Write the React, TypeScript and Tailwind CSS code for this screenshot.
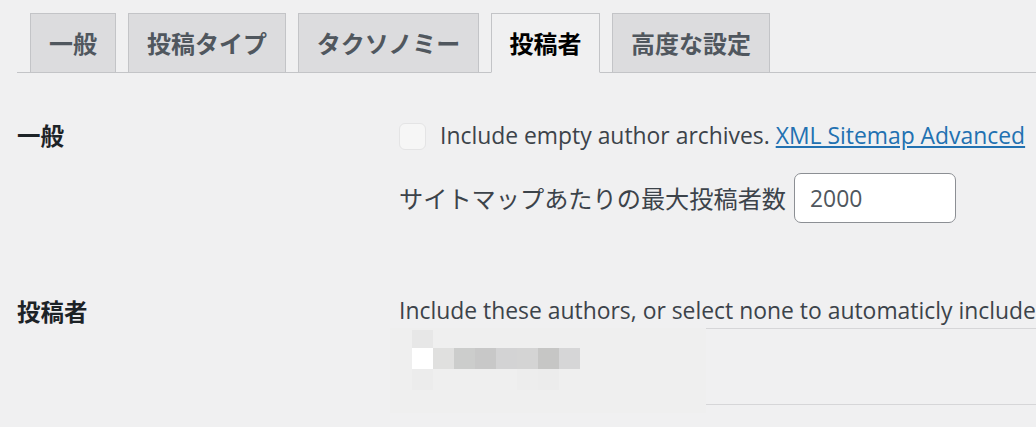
import React from "react";

type Tab = { label: string; width: string; active?: boolean };

const tabs: Tab[] = [
  { label: "一般", width: "w-[86px]" },
  { label: "投稿タイプ", width: "w-[158px]" },
  { label: "タクソノミー", width: "w-[181px]" },
  { label: "投稿者", width: "w-[109px]", active: true },
  { label: "高度な設定", width: "w-[158px]" },
];

// mosaic cells that hide the author names
const mosaic = [
  { x: 22, y: 2, c: "bg-[#e7e7e7]" },
  { x: 22, y: 20, c: "bg-[#ffffff]" },
  { x: 43, y: 20, c: "bg-[#e0e0df]" },
  { x: 64, y: 20, c: "bg-[#cccdcc]" },
  { x: 85, y: 20, c: "bg-[#c8c8c8]" },
  { x: 106, y: 20, c: "bg-[#d3d3d4]" },
  { x: 127, y: 20, c: "bg-[#d4d4d4]" },
  { x: 148, y: 20, c: "bg-[#c6c6c5]" },
  { x: 169, y: 20, c: "bg-[#d6d6d7]" },
  { x: 22, y: 41, c: "bg-[#ececec]" },
  { x: 127, y: 41, c: "bg-[#ededed]" },
  { x: 148, y: 41, c: "bg-[#ececec]" },
];

export default function App() {
  return (
    <div
      className="relative h-[427px] w-[1036px] overflow-hidden bg-[#f0f0f1] text-[#3c434a]"
      style={{ fontFamily: '"Open Sans", "Noto Sans CJK JP", sans-serif' }}
    >
      {/* tabs */}
      <div className="ml-[17px] flex items-end gap-[12px] border-b border-[#c3c4c7] pl-[13px] pt-[13px]">
        {tabs.map((tab) => (
          <div
            key={tab.label}
            className={`-mb-px flex h-[60px] items-center justify-center border border-[#c3c4c7] text-[24px] font-semibold ${tab.width} ${
              tab.active ? "border-b-[#f0f0f1] bg-[#f0f0f1] text-[#000000]" : "bg-[#dcdcde] text-[#50575e]"
            }`}
            style={{ fontFamily: '"Noto Sans CJK JP", sans-serif' }}
          >
            {tab.label}
          </div>
        ))}
      </div>

      <div className="pl-[17px]">
        {/* row: 一般 */}
        <div className="mt-[46px] flex">
          <div
            className="flex h-[34px] w-[382px] shrink-0 items-center text-[23.5px] font-semibold text-[#1d2327]"
            style={{ fontFamily: '"Noto Sans CJK JP", sans-serif' }}
          >
            一般
          </div>
          <div className="flex flex-col">
            <div className="flex h-[34px] items-center gap-[14px] whitespace-nowrap text-[22.9px]">
              <span className="h-[27px] w-[27px] shrink-0 rounded-[6px] border border-[#e4e4e5] bg-[#f6f6f6]" />
              <span>
                Include empty author archives.{" "}
                <a href="#" className="text-[#2271b1] underline">
                  XML Sitemap Advanced
                </a>
              </span>
            </div>
            <div className="mt-[20px] flex items-center gap-[8px]">
              <span className="whitespace-nowrap text-[24.2px]" style={{ fontFamily: '"Noto Sans CJK JP", sans-serif' }}>
                サイトマップあたりの最大投稿者数
              </span>
              <input
                readOnly
                value="2000"
                className="h-[50px] w-[162px] rounded-[7px] border border-[#8c8f94] bg-white px-[15px] text-[22.9px] text-[#50575e] outline-none"
              />
            </div>
          </div>
        </div>

        {/* row: 投稿者 */}
        <div className="mt-[72px] flex">
          <div
            className="flex h-[33px] w-[382px] shrink-0 items-center text-[23.5px] font-semibold text-[#1d2327]"
            style={{ fontFamily: '"Noto Sans CJK JP", sans-serif' }}
          >
            投稿者
          </div>
          <div className="flex flex-col">
            <div className="flex h-[33px] items-center whitespace-nowrap text-[22.9px]">
              Include these authors, or select none to automaticly include
            </div>
            <div className="h-[77px] w-[800px] border-y border-[#d6d6d8]" />
          </div>
        </div>
      </div>

      {/* pixelated cover over the author list */}
      <div className="absolute left-[390px] top-[328px] h-[85px] w-[316px] bg-[#efefef]">
        {mosaic.map((m, i) => (
          <span
            key={i}
            className={`absolute h-[21px] w-[21px] ${m.c}`}
            style={{ left: m.x, top: m.y }}
          />
        ))}
      </div>
    </div>
  );
}
